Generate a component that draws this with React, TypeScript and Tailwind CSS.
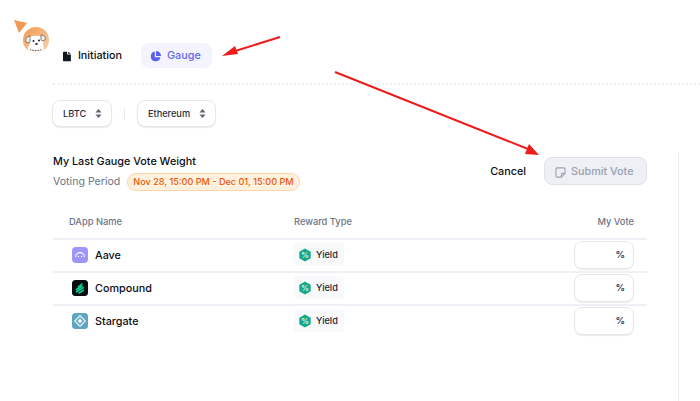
const DAPPS = [
  { name: 'Aave', icon: <AaveIcon /> },
  { name: 'Compound', icon: <CompoundIcon /> },
  { name: 'Stargate', icon: <StargateIcon /> },
];

function AaveIcon() {
  return (
    <svg viewBox="0 0 16 16" className="h-[16px] w-[16px]">
      <rect width="16" height="16" rx="4" fill="#9f95fb" />
      <path d="M3.6 10a4.4 4.4 0 0 1 8.8 0" fill="none" stroke="#fff" strokeWidth="1.1" />
      <circle cx="6.4" cy="9.6" r=".7" fill="#fff" />
      <circle cx="9.6" cy="9.6" r=".7" fill="#fff" />
    </svg>
  );
}

function CompoundIcon() {
  return (
    <svg viewBox="0 0 16 16" className="h-[16px] w-[16px]">
      <rect width="16" height="16" rx="3.5" fill="#070a0e" />
      <path d="M4.5 9.5 10 6.2M4.5 11.8 11.5 7.6M7 13l4.5-2.7M6.5 6.8 10 4" stroke="#00d395" strokeWidth="1.6" strokeLinecap="round" />
    </svg>
  );
}

function StargateIcon() {
  return (
    <svg viewBox="0 0 16 16" className="h-[16px] w-[16px]">
      <rect width="16" height="16" rx="3.5" fill="#5fa5c2" />
      <path d="M8 2.8 13.2 8 8 13.2 2.8 8Z" fill="none" stroke="#dcecf3" strokeWidth="1.4" />
      <path d="M8 5.8 10.2 8 8 10.2 5.8 8Z" fill="#fff" />
    </svg>
  );
}

function GaugeIcon() {
  return (
    <svg viewBox="0 0 12 12" className="h-[11px] w-[11px]" fill="#5d5fef">
      <path d="M5.2.6v6.2h6.2A5.3 5.3 0 1 1 5.2.6Z" />
      <path d="M6.6 0A5.4 5.4 0 0 1 12 5.4H6.6Z" />
    </svg>
  );
}

function FileIcon() {
  return (
    <svg viewBox="0 0 9 11" className="h-[11px] w-[9px]" fill="#12161f">
      <path d="M1 0h3.6v3.2H9V10a1 1 0 0 1-1 1H1a1 1 0 0 1-1-1V1a1 1 0 0 1 1-1Z" />
      <path d="M5.6 0 9 2.3H5.6Z" />
    </svg>
  );
}

function UpDown() {
  return (
    <svg viewBox="0 0 7 9" className="h-[9px] w-[7px]" fill="#5b6473">
      <path d="M3.5 0 6.5 3.4H.5Z" />
      <path d="M3.5 9 .5 5.6h6Z" />
    </svg>
  );
}

function NoteIcon() {
  return (
    <svg viewBox="0 0 12 12" className="h-[11px] w-[11px]" fill="none" stroke="#9aa1b0" strokeWidth="1.2" strokeLinejoin="round">
      <path d="M2.5 1h7A1.5 1.5 0 0 1 11 2.5V7l-4 4H2.5A1.5 1.5 0 0 1 1 9.5v-7A1.5 1.5 0 0 1 2.5 1Z" />
      <path d="M11 7H8a1 1 0 0 0-1 1v3" />
    </svg>
  );
}

function YieldBadge() {
  return (
    <div className="flex h-[23px] w-[50px] items-center gap-[4px] rounded bg-[#f8f9fb] pl-[4px]">
      <svg viewBox="0 0 14 14" className="h-[14px] w-[14px] shrink-0">
        <path d="M7 .5 12.7 3.7v6.6L7 13.5 1.3 10.3V3.7Z" fill="#17a88a" />
        <text x="7" y="9.6" textAnchor="middle" fontSize="7.5" fontWeight="700" fill="#d9f5ee" fontFamily="Inter, sans-serif">%</text>
      </svg>
      <span className="text-[9.2px] font-medium text-[#1b2230]">Yield</span>
    </div>
  );
}

function SelectBox({ label, width }: { label: string; width: string }) {
  return (
    <div className={`flex h-[27px] items-center justify-between rounded-lg border border-[#e5e7eb] bg-white pl-[10px] pr-[9px] shadow-[0_1px_1px_rgba(0,0,0,0.08)] ${width}`}>
      <span className="text-[9.2px] font-medium text-[#27303f]">{label}</span>
      <UpDown />
    </div>
  );
}

function Row({ name, icon }: { name: string; icon: React.ReactNode }) {
  return (
    <div className="flex h-[33px] items-center border-t-2 border-[#eef0f5] pb-[2px] pl-[17px] pr-[13px]">
      <div className="flex w-[224px] items-center">
        <div className="flex h-[19px] w-[19px] items-center justify-center rounded-md">{icon}</div>
        <span className="ml-[6px] mt-[3px] text-[10.8px] font-[450] text-[#0b0e15]">{name}</span>
      </div>
      <YieldBadge />
      <div className="ml-auto flex h-[28px] w-[60px] items-center justify-end rounded-lg border border-[#e5e7eb] pr-[8px] pt-[2px] shadow-[0_1px_1px_rgba(0,0,0,0.08)]">
        <span className="text-[9.5px] font-semibold text-[#2d3652]">%</span>
      </div>
    </div>
  );
}

export default function App() {
  return (
    <div className="relative h-[401px] w-[700px] overflow-hidden bg-white font-['Inter',sans-serif]">
      {/* Top tabs */}
      <div className="ml-[53px] flex h-[85px] items-end border-b-2 border-dotted border-[#eceef2] pb-[15px] pl-[10px]">
        <div className="flex h-[25px] w-[59px] items-center gap-[7px] pt-[2px] text-[10.8px] font-[450] whitespace-nowrap text-[#0b0e15]">
          <FileIcon />
          Initiation
        </div>
        <div className="ml-[19px] flex h-[25px] w-[71px] items-center gap-[6px] rounded-lg bg-[#f3f4fe] pl-[9px] pt-[2px] text-[10.8px] font-[450] text-[#6366e8]">
          <GaugeIcon />
          Gauge
        </div>
      </div>
      <div className="pl-[52px] pr-[53px]">
        {/* Selects */}
        <div className="mt-[15px] flex items-center">
          <SelectBox label="LBTC" width="w-[60px]" />
          <div className="mx-[12px] h-[12px] w-px bg-[#e5e9f0]" />
          <SelectBox label="Ethereum" width="w-[79px]" />
        </div>
        {/* Heading */}
        <div className="mt-[30px] flex h-[49px] items-start justify-between">
          <div className="-mt-[2px] pl-px">
            <div className="text-[10.8px] leading-[14px] font-[450] text-[#0b0e15]">My Last Gauge Vote Weight</div>
            <div className="mt-[4px] flex items-center">
              <span className="w-[67px] text-[10.6px] whitespace-nowrap text-[#6b7485]">Voting Period</span>
              <span className="ml-[7px] flex h-[18px] w-[173px] items-center justify-center rounded-full border border-[#fbd5a5] bg-[#fff1dd] text-[9.1px] font-[450] text-[#e8590c]">
                Nov 28, 15:00 PM - Dec 01, 15:00 PM
              </span>
            </div>
          </div>
          <div className="flex items-center">
            <span className="mt-[2px] text-[10.8px] font-[450] text-[#0b0e15]">Cancel</span>
            <div className="ml-[18px] flex h-[28px] w-[103px] items-center gap-[5px] rounded-lg border border-[#dfe2e8] bg-[#eef0f5] pl-[10px] pt-[2px] text-[10.8px] font-[450] text-[#9aa1b0]">
              <NoteIcon />
              Submit Vote
            </div>
          </div>
        </div>
      </div>
      {/* Table */}
      <div className="ml-[53px] w-[594px]">
        <div className="flex h-[32px] items-center pl-[16px] pr-[13px] text-[9.3px] font-[450] text-[#6b7485]">
          <span className="w-[225px]">DApp Name</span>
          <span>Reward Type</span>
          <span className="ml-auto">My Vote</span>
        </div>
        {DAPPS.map((d) => (
          <Row key={d.name} name={d.name} icon={d.icon} />
        ))}
      </div>
      {/* Right panel edge */}
      <div className="absolute left-[678px] top-[153px] h-[248px] w-px bg-[#e8ebf2]" />
      {/* Avatar and cursor */}
      <svg className="absolute left-[10px] top-[15px]" width="42" height="42" viewBox="0 0 42 42">
        <defs>
          <linearGradient id="av" x1="0" y1="0" x2="1" y2="1">
            <stop offset="0" stopColor="#f29a4f" />
            <stop offset="1" stopColor="#fad2ac" />
          </linearGradient>
          <clipPath id="avc">
            <circle cx="26" cy="25" r="13" />
          </clipPath>
        </defs>
        <path d="M4 5 17 8 9 18Z" fill="#f09a56" />
        <circle cx="26" cy="25" r="13" fill="url(#av)" />
        <g clipPath="url(#avc)">
          <path d="M18 38c-1-4 0-7 2-9-2-2-2-5 0-7 2-1.500 9-2 12 0 2 2 2 5 1 7 1 3 1 6 0 9Z" fill="#fff" />
          <path d="M20 21c-3 0-5 3-4 6 1 1 3 1 4 0Zm11-1c3 0 5 2 4 5-1 1-3 1-4 0Z" fill="#f3efe9" stroke="#57504a" strokeWidth=".7" />
          <circle cx="23.500" cy="26" r="1" fill="#222" />
          <circle cx="29" cy="25.500" r="1" fill="#222" />
          <ellipse cx="26.500" cy="29" rx="1.300" ry="1" fill="#222" />
          <path d="M20 34.500c3 1.500 8 1.500 12 0" fill="none" stroke="#57504a" strokeWidth="1" strokeDasharray="1.500 1" />
        </g>
      </svg>
      {/* Annotation arrows */}
      <svg className="absolute inset-0" width="700" height="401" viewBox="0 0 700 401">
        <path d="M280 37 232 52" stroke="#ee1c1c" strokeWidth="2" />
        <path d="M222 56 235 46 238 54Z" fill="#ee1c1c" />
        <path d="M335 72 528 149" stroke="#ee1c1c" strokeWidth="2" />
        <path d="M539 155 525 154 529 144Z" fill="#ee1c1c" />
      </svg>
    </div>
  );
}
